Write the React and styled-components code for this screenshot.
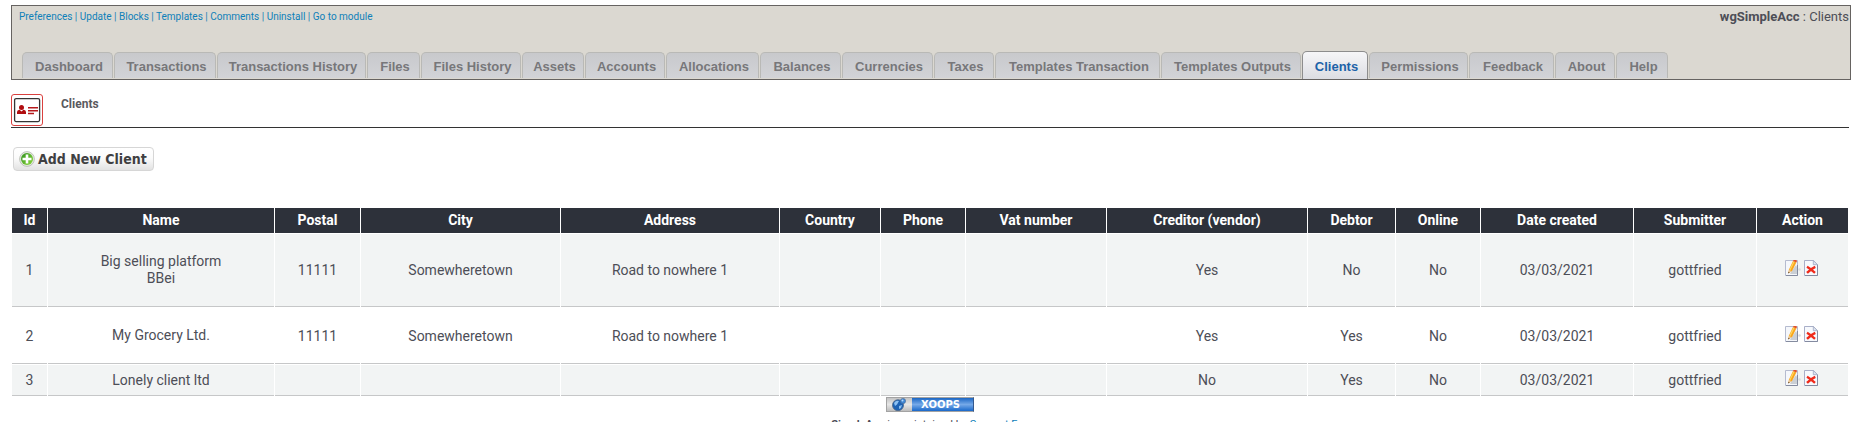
import React from 'react';
import styled, { createGlobalStyle } from 'styled-components';

const GlobalStyle = createGlobalStyle`
  *, *::before, *::after { box-sizing: border-box; }
  body {
    margin: 0;
    background: #fff;
    color: #4d4e57;
    font: 14px/17px Roboto, "Liberation Sans", sans-serif;
  }
`;

const Page = styled.div`
  padding: 5px 11px 0;
`;

const Content = styled.main`
  margin-right: 2px;
`;

const ModuleHeader = styled.header`
  display: flex;
  flex-direction: column;
  justify-content: space-between;
  min-height: 75px;
  background: #dbd8d1;
  border: 1px solid #666361;
`;

const HeaderRow = styled.div`
  display: flex;
  justify-content: space-between;
  padding: 2px 1px 0 7px;
`;

const ModuleLinks = styled.nav`
  font-size: 10px;
  color: #1b80b5;
`;

const Link = styled.a`
  color: #0e80b9;
  text-decoration: none;
`;

const Breadcrumb = styled.div`
  font-size: 13px;
`;

const Tabs = styled.nav`
  display: flex;
  align-items: flex-end;
  gap: 1px;
  padding-left: 10px;
`;

const Tab = styled.a`
  width: ${(p) => p.$width}px;
  height: ${(p) => (p.$active ? 28 : 26)}px;
  margin-bottom: ${(p) => (p.$active ? 0 : 1)}px;
  padding: ${(p) => (p.$active ? 6 : 5)}px 0 0 3px;
  border: 1px solid ${(p) => (p.$active ? '#8d8d8d' : '#b9b9b6')};
  border-bottom: 0;
  border-radius: 5px 5px 0 0;
  background: ${(p) =>
    p.$active
      ? 'linear-gradient(#f6f6f8, #dcdde2)'
      : 'linear-gradient(#c8c9cc, #d2d3d7)'};
  color: ${(p) => (p.$active ? '#1d62a8' : '#77777a')};
  font: bold 13px/17px "Liberation Sans", Arial, sans-serif;
  text-align: center;
  text-decoration: none;
  white-space: nowrap;
`;

const TitleBar = styled.div`
  display: flex;
  gap: 18px;
  margin-top: 14px;
  padding-bottom: 1px;
  border-bottom: 1px solid #333;
`;

const Title = styled.h1`
  margin: 2px 0 0;
  color: #5a5a5f;
  font-size: 12px;
  line-height: 17px;
`;

const Toolbar = styled.div`
  display: flex;
  margin: 19px 0 36px 2px;
`;

const AddButton = styled.button`
  display: flex;
  align-items: center;
  gap: 3px;
  height: 24px;
  padding: 0 6px 0 5px;
  border: 1px solid #d6d6d6;
  border-radius: 4px;
  background: linear-gradient(#fff, #fbfbfb 45%, #e2e2e2);
  color: #3f3f41;
  font: bold 14px/17px "DejaVu Sans Condensed", Tahoma, sans-serif;
  white-space: nowrap;
`;

const ClientTable = styled.table`
  width: 100%;
  table-layout: fixed;
  border-collapse: separate;
  border-spacing: 1px;
  text-align: center;
`;

const HeadCell = styled.th`
  padding: 4px 0;
  background: #2d313a;
  color: #fff;
  font-weight: bold;
`;

const Row = styled.tr`
  background: ${(p) => (p.$shaded ? '#f2f4f4' : '#fff')};
`;

const Cell = styled.td`
  padding: 7px 0 6px;
  border-bottom: 1px solid #c6c7c8;
  vertical-align: middle;
`;

const ActionCell = styled(Cell)`
  padding: 4px 0 8px;
`;

const Paragraph = styled.p`
  margin: 12px 0 13px;
`;

const Actions = styled.div`
  display: flex;
  justify-content: center;
  gap: 3px;
`;

const IconLink = styled.a`
  display: block;
  height: 16px;
`;

const Icon = styled.svg`
  display: block;
`;

const Footer = styled.footer`
  display: flex;
  flex-direction: column;
  align-items: center;
  gap: 4px;
  font-size: 11px;
`;

const Badge = styled.a`
  display: flex;
  width: 88px;
  height: 15px;
  border: 1px solid #a3a3a3;
  border-right-color: #35598d;
  background: linear-gradient(#c4c4c4, #e6e6e6 50%, #bcbcbc);
  text-decoration: none;
`;

const BadgeIcon = styled.span`
  width: 25px;
  padding-left: 4px;
`;

const BadgeText = styled.span`
  flex: 1;
  padding-right: 4px;
  background: linear-gradient(#1b66c4, #76a9e8 50%, #1968ca);
  color: #fff;
  font: bold 10px/13px "DejaVu Sans", Verdana, sans-serif;
  text-align: center;
`;

const moduleLinks = ['Preferences', 'Update', 'Blocks', 'Templates', 'Comments', 'Uninstall', 'Go to module'];

const tabs = [
  ['Dashboard', 91], ['Transactions', 102], ['Transactions History', 149], ['Files', 53],
  ['Files History', 100], ['Assets', 62], ['Accounts', 80], ['Allocations', 93],
  ['Balances', 81], ['Currencies', 91], ['Taxes', 60], ['Templates Transaction', 165],
  ['Templates Outputs', 140], ['Clients', 66], ['Permissions', 99], ['Feedback', 85],
  ['About', 60], ['Help', 52],
];

const columns = [
  ['Id', 35], ['Name', 226], ['Postal', 85], ['City', 199], ['Address', 218], ['Country', 100],
  ['Phone', 84], ['Vat number', 140], ['Creditor (vendor)', 200], ['Debtor', 87],
  ['Online', 84], ['Date created', 152], ['Submitter', 122], ['Action', 91],
];

const clients = [
  {
    id: 1,
    name: <Paragraph>Big selling platform<br />BBei</Paragraph>,
    rest: ['11111', 'Somewheretown', 'Road to nowhere 1', '', '', '', 'Yes', 'No', 'No', '03/03/2021', 'gottfried'],
  },
  {
    id: 2,
    name: <Paragraph>My Grocery Ltd.</Paragraph>,
    rest: ['11111', 'Somewheretown', 'Road to nowhere 1', '', '', '', 'Yes', 'Yes', 'No', '03/03/2021', 'gottfried'],
  },
  {
    id: 3,
    name: 'Lonely client ltd',
    rest: ['', '', '', '', '', '', 'No', 'Yes', 'No', '03/03/2021', 'gottfried'],
  },
];

const ClientsIcon = () => (
  <Icon width="32" height="32" viewBox="0 0 32 32" aria-hidden="true">
    <rect x=".5" y=".5" width="31" height="31" rx="2.5" fill="#fff" stroke="#d9413f" />
    <rect x="3.6" y="4.6" width="25" height="23" rx="1.5" fill="#fff" stroke="#343434" strokeWidth="1.3" />
    <circle cx="10.5" cy="13.5" r="2.5" fill="#b00d10" />
    <path d="M6 20v-2q0-2 2.5-2.3l2 1.8 2-1.8Q15 16 15 18v2z" fill="#b00d10" />
    <path d="M17 13.8h10M17 16.8h10M17 19.5h6" stroke="#b5181b" strokeWidth="1.5" />
  </Icon>
);

const AddIcon = () => (
  <Icon width="16" height="16" viewBox="0 0 16 16" aria-hidden="true">
    <defs>
      <linearGradient id="addFill" x1="0" y1="0" x2="1" y2="1">
        <stop offset="0" stopColor="#2f8f1f" />
        <stop offset="1" stopColor="#8edb3c" />
      </linearGradient>
    </defs>
    <circle cx="8" cy="8" r="7.4" fill="#e4eadf" stroke="#b3b8ae" strokeWidth=".8" />
    <circle cx="8" cy="8" r="6" fill="url(#addFill)" />
    <path d="M6.7 3.5h2.6v3.2h3.2v2.6H9.3v3.2H6.7V9.3H3.5V6.7h3.2z" fill="#fff" />
  </Icon>
);

const EditIcon = () => (
  <Icon width="16" height="16" viewBox="0 0 16 16" aria-hidden="true">
    <path d="M.5.5h12v15H.5z" fill="#f5f7fb" stroke="#b5bbcf" />
    <path d="M12.5 5v10.5H1" fill="none" stroke="#848b9f" />
    <path d="M6 12l5-7 1 2v7H5z" fill="#bfc4cc" opacity=".8" />
    <circle cx="14.5" cy="9.5" r="1.3" fill="#dcdedf" />
    <path d="M3.3 13.2l.7-3.7L8 1l3.300 1.600-4.200 8.300z" fill="#f9a51a" />
    <path d="M5 9.8L9 1.5" stroke="#ffd65e" strokeWidth="1.2" />
    <path d="M8 1l.6-1h2.600l.8 1-.7 1.600z" fill="#e2532a" />
    <path d="M3.3 13.2l.6-3.5 2.9 1.5z" fill="#eac79a" />
    <path d="M3.2 13.5l.3-1.7 1.2.7z" fill="#4a3320" />
  </Icon>
);

const DeleteIcon = () => (
  <Icon width="16" height="16" viewBox="0 0 16 16" aria-hidden="true">
    <path d="M.5.5h8.8l4.2 4.2v10.8H.5z" fill="#f7f9fd" stroke="#a9afc8" />
    <path d="M13.5 4.7v10.8H1" fill="none" stroke="#838aa0" />
    <path d="M9.3.5v4.2h4.2z" fill="#dfe5f2" stroke="#a0a8c0" strokeWidth=".8" />
    <path d="M3 6.8q3.5 2 8 6M11.300 6.800q-4.500 2-8.300 6" fill="none" stroke="#ef2a1a" strokeWidth="2.4" />
  </Icon>
);

const GlobeIcon = () => (
  <Icon width="16" height="13" viewBox="0 0 16 13" aria-hidden="true">
    <circle cx="7" cy="7.2" r="5.5" fill="#1d62b4" stroke="#4b6484" strokeWidth=".8" />
    <path d="M3 5q2-3 5-2L6 6.5 4 8zM8 8l3-1-1 3-2 1z" fill="#8cc0f2" />
    <circle cx="12" cy="3" r="2.6" fill="#3f87d6" stroke="#496a94" strokeWidth=".6" />
    <circle cx="11.5" cy="2.5" r="1" fill="#b5d8f8" />
  </Icon>
);

export default function App() {
  return (
    <Page>
      <GlobalStyle />
      <ModuleHeader>
        <HeaderRow>
          <ModuleLinks aria-label="Module">
            {moduleLinks.map((label, i) => (
              <React.Fragment key={label}>
                {i > 0 && ' | '}
                <Link href="#">{label}</Link>
              </React.Fragment>
            ))}
          </ModuleLinks>
          <Breadcrumb><strong>wgSimpleAcc</strong> : Clients</Breadcrumb>
        </HeaderRow>
        <Tabs aria-label="Sections">
          {tabs.map(([label, width]) => (
            <Tab key={label} href="#" $width={width} $active={label === 'Clients'}>{label}</Tab>
          ))}
        </Tabs>
      </ModuleHeader>
      <Content>
        <TitleBar>
          <ClientsIcon />
          <Title>Clients</Title>
        </TitleBar>
        <Toolbar>
          <AddButton type="button"><AddIcon />Add New Client</AddButton>
        </Toolbar>
        <ClientTable>
          <colgroup>
            {columns.map(([label, width]) => <col key={label} width={width} />)}
          </colgroup>
          <thead>
            <tr>{columns.map(([label]) => <HeadCell key={label} scope="col">{label}</HeadCell>)}</tr>
          </thead>
          <tbody>
            {clients.map((client, i) => (
              <Row key={client.id} $shaded={i % 2 === 0}>
                <Cell>{client.id}</Cell>
                <Cell>{client.name}</Cell>
                {client.rest.map((value, n) => <Cell key={n}>{value}</Cell>)}
                <ActionCell>
                  <Actions>
                    <IconLink href="#" aria-label="Edit"><EditIcon /></IconLink>
                    <IconLink href="#" aria-label="Delete"><DeleteIcon /></IconLink>
                  </Actions>
                </ActionCell>
              </Row>
            ))}
          </tbody>
        </ClientTable>
        <Footer>
          <Badge href="#">
            <BadgeIcon><GlobeIcon /></BadgeIcon>
            <BadgeText>XOOPS</BadgeText>
          </Badge>
          <div><strong>wgSimpleAcc</strong> is maintained by <Link href="#">Support Forum</Link></div>
        </Footer>
      </Content>
    </Page>
  );
}
